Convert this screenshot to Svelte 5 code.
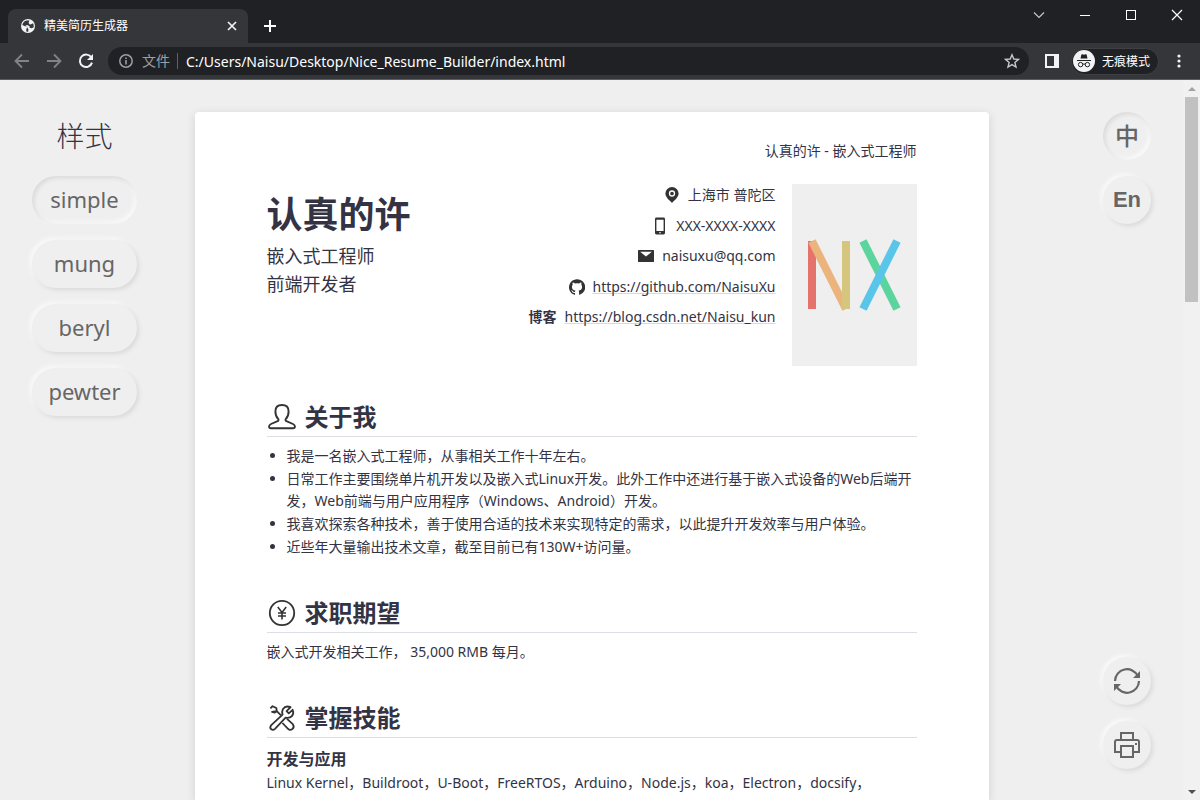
<script lang="ts">
  const styles = ['simple', 'mung', 'beryl', 'pewter'];
  let activeStyle = $state('simple');
  let language = $state('zh');
  let address = $state('C:/Users/Naisu/Desktop/Nice_Resume_Builder/index.html');
</script>

<div class="window">
  <header class="tabstrip">
    <div class="tab">
      <svg class="globe" width="14" height="14" viewBox="0 0 14 14" aria-hidden="true">
        <circle cx="7" cy="7" r="7" fill="#f1f3f4" />
        <path d="M5.6 1.4 C3.4 1.9 1.7 3.6 1.3 6 L4 7.3 L5.6 7.3 L6.6 8.6 L5.3 9.8 L5.3 12.4 C6 12.6 6.600 12.700 7.200 12.700 L7.400 10.200 L6.200 8.200 L4.400 6.600 L6.200 6 L8.600 7.200 L8.600 8.800 L10.4 9.3 L12.6 8.4 C12.9 7 12.6 5.4 12 4.2 L10.2 5.2 L8.6 5.400 L7.600 3.800 L8.400 1.600 Z" fill="#35363a" />
      </svg>
      <span class="tab-title">精美简历生成器</span>
      <button class="plain" aria-label="关闭标签页">
        <svg width="10" height="10" viewBox="0 0 10 10"><path d="M1 1 L9 9 M9 1 L1 9" stroke="#f1f3f4" stroke-width="1.7" /></svg>
      </button>
    </div>
    <button class="plain new-tab" aria-label="新标签页">
      <svg width="12" height="12" viewBox="0 0 12 12"><path d="M6 0 V12 M0 6 H12" stroke="#fff" stroke-width="2" /></svg>
    </button>
    <div class="window-controls">
      <button class="plain" aria-label="搜索标签页"><svg width="12" height="12" viewBox="0 0 12 12"><path d="M1 3.5 L6 8.5 L11 3.5" fill="none" stroke="#ccc" stroke-width="1.1" /></svg></button>
      <button class="plain" aria-label="最小化"><svg width="12" height="12" viewBox="0 0 12 12"><path d="M1 6.5 H11" stroke="#fff" /></svg></button>
      <button class="plain" aria-label="最大化"><svg width="12" height="12" viewBox="0 0 12 12"><rect x="1.5" y="1.5" width="9" height="9" fill="none" stroke="#fff" /></svg></button>
      <button class="plain" aria-label="关闭"><svg width="12" height="12" viewBox="0 0 12 12"><path d="M1 1 L11 11 M11 1 L1 11" stroke="#fff" stroke-width="1.2" /></svg></button>
    </div>
  </header>

  <nav class="toolbar">
    <div class="nav-buttons">
      <button class="plain" aria-label="后退"><svg width="16" height="16" viewBox="0 0 16 16"><path d="M15 8 H2 M8 1.5 L1.5 8 L8 14.5" fill="none" stroke="#818386" stroke-width="1.8" /></svg></button>
      <button class="plain" aria-label="前进"><svg width="16" height="16" viewBox="0 0 16 16"><path d="M1 8 H14 M8 1.5 L14.5 8 L8 14.5" fill="none" stroke="#818386" stroke-width="1.8" /></svg></button>
      <button class="plain" aria-label="重新加载"><svg width="16" height="16" viewBox="0 0 16 16"><path d="M13.4 4.6 A6.2 6.2 0 1 0 14 9.6" fill="none" stroke="#f1f3f4" stroke-width="2" /><path d="M15 1 V7 H9 Z" fill="#f1f3f4" /></svg></button>
    </div>
    <div class="omnibox">
      <svg width="14" height="14" viewBox="0 0 14 14" aria-hidden="true"><circle cx="7" cy="7" r="6.2" fill="none" stroke="#9aa0a6" stroke-width="1.5" /><path d="M7 6 V10.5 M7 3.4 V5" stroke="#9aa0a6" stroke-width="1.6" /></svg>
      <span class="scheme">文件</span>
      <input aria-label="地址" bind:value={address} />
      <button class="plain" aria-label="收藏">
        <svg width="16" height="16" viewBox="0 0 16 16"><path d="M8 1.8 L9.8 6 L14.4 6.4 L10.9 9.4 L12 14 L8 11.6 L4 14 L5.1 9.4 L1.6 6.4 L6.2 6 Z" fill="none" stroke="#c4c7c9" stroke-width="1.4" /></svg>
      </button>
    </div>
    <button class="plain side" aria-label="侧边栏">
      <svg width="14" height="14" viewBox="0 0 14 14"><path fill-rule="evenodd" d="M0 0 H14 V14 H0 Z M2 2 H9 V12 H2 Z" fill="#f1f3f4" /></svg>
    </button>
    <button class="incognito">
      <svg width="22" height="22" viewBox="0 0 22 22" aria-hidden="true">
        <circle cx="11" cy="11" r="11" fill="#f1f3f4" />
        <path d="M7.5 8.6 L8.4 4.6 Q8.6 4 9.3 4.2 L11 4.7 L12.7 4.2 Q13.4 4 13.6 4.6 L14.5 8.6 Z" fill="#202124" />
        <path d="M4 10.5 H18" stroke="#202124" stroke-width="1" />
        <circle cx="7.6" cy="14.6" r="2.2" fill="none" stroke="#202124" stroke-width="1" />
        <circle cx="14.4" cy="14.6" r="2.2" fill="none" stroke="#202124" stroke-width="1" />
        <path d="M9.8 14.4 Q11 13.4 12.2 14.4" fill="none" stroke="#202124" />
      </svg>
      <span>无痕模式</span>
    </button>
    <button class="plain menu" aria-label="菜单">
      <svg width="4" height="14" viewBox="0 0 4 14"><g fill="#f1f3f4"><circle cx="2" cy="2" r="1.6" /><circle cx="2" cy="7" r="1.6" /><circle cx="2" cy="12" r="1.6" /></g></svg>
    </button>
  </nav>

  <div class="viewport">
    <div class="page">
      <aside class="styles">
        <h2>样式</h2>
        {#each styles as name}
          <button class="soft pill" class:pressed={activeStyle === name} aria-pressed={activeStyle === name} onclick={() => (activeStyle = name)}>{name}</button>
        {/each}
      </aside>

      <main class="paper">
        <p class="running-head">认真的许 - 嵌入式工程师</p>

        <div class="intro">
          <div class="identity">
            <h1>认真的许</h1>
            <p>嵌入式工程师</p>
            <p>前端开发者</p>
          </div>
          <ul class="contacts">
            <li>
              <svg width="16" height="16" viewBox="0 0 16 16" aria-hidden="true"><path d="M8 0 A6.6 6.6 0 0 0 1.4 6.6 C1.4 10.4 6 14 8 16 C10 14 14.6 10.4 14.6 6.6 A6.6 6.6 0 0 0 8 0 Z" fill="#333" /><circle cx="8" cy="6.5" r="2.5" fill="none" stroke="#fff" stroke-width="1.3" /></svg>
              <span>上海市 普陀区</span>
            </li>
            <li>
              <svg width="16" height="18" viewBox="0 0 16 18" aria-hidden="true"><path fill-rule="evenodd" d="M4.4 0.6 H11.6 Q13 0.6 13 2 V16 Q13 17.4 11.6 17.4 H4.4 Q3 17.4 3 16 V2 Q3 0.6 4.4 0.6 Z M4.4 2.8 V14 H11.6 V2.8 Z M8 15 A0.8 0.8 0 1 0 8 16.6 A0.8 0.8 0 1 0 8 15 Z" fill="#333" /></svg>
              <span>XXX-XXXX-XXXX</span>
            </li>
            <li>
              <svg width="16" height="12" viewBox="0 0 16 12" aria-hidden="true"><rect width="16" height="12" rx="0.6" fill="#333" /><path d="M2.2 1.7 H13.8 L8 6.6 Z" fill="#fff" /></svg>
              <span>naisuxu@qq.com</span>
            </li>
            <li>
              <svg width="16" height="16" viewBox="0 0 16 16" aria-hidden="true"><path d="M8 .2C3.6.2 0 3.8 0 8.2c0 3.5 2.3 6.500 5.500 7.600.4.1.5-.2.5-.4v-1.500c-2.200.5-2.700-.9-2.700-.9-.4-.9-.9-1.200-.9-1.200-.7-.5.1-.5.1-.5.8.1 1.200.8 1.200.8.7 1.200 1.900.9 2.300.7 0-.4.3-.8.5-1C4.700 11.400 2.900 10.700 2.900 7.800c0-.9.3-1.600.8-2.100-.1-.2-.4-1 .1-2.100 0 0 .7-.2 2.200.8a7.600 7.600 0 0 1 4 0c1.500-1 2.200-.8 2.200-.8.4 1.100.2 1.900.1 2.100.5.6.8 1.300.8 2.100 0 3-1.800 3.600-3.600 3.900.3.200.6.7.6 1.500v2.200c0 .2.100.5.600.4A8 8 0 0 0 8 .2Z" fill="#333" /></svg>
              <a href="https://github.com/NaisuXu">https://github.com/NaisuXu</a>
            </li>
            <li>
              <strong>博客</strong>
              <a href="https://blog.csdn.net/Naisu_kun">https://blog.csdn.net/Naisu_kun</a>
            </li>
          </ul>
          <svg class="photo" width="125" height="182" viewBox="0 0 125 182" role="img" aria-label="NX">
            <rect width="125" height="182" fill="#efefef" />
            <g stroke-width="8" fill="none">
              <path d="M20 57 V125" stroke="#e5736b" />
              <path d="M54 57 V125" stroke="#d6c57c" />
              <path d="M20 57 L54 125" stroke="#ebb47c" />
              <path d="M54 57 V125" stroke="#d6c57c" />
              <path d="M71 57 L105 125" stroke="#5cd49e" />
              <path d="M105 57 L71 125" stroke="#59c5e8" />
            </g>
          </svg>
        </div>

        <section>
          <h2>
            <svg width="30" height="30" viewBox="0 0 30 30" aria-hidden="true"><path d="M11.300 17.100 C9.200 15 8.400 12.400 8.400 9.400 C8.400 5.200 11 3 15 3 C19 3 21.600 5.200 21.600 9.400 C21.600 12.400 20.800 15 18.700 17.100 C18.200 17.800 18.500 18.800 19.400 19.200 L26 22 C28.400 23.100 28.800 26.200 26 26.200 H4 C1.200 26.200 1.600 23.100 4 22 L10.600 19.200 C11.500 18.800 11.800 17.800 11.300 17.100 Z" fill="none" stroke="#333" stroke-width="1.900" /></svg>
            关于我
          </h2>
          <ul class="about">
            <li>我是一名嵌入式工程师，从事相关工作十年左右。</li>
            <li>日常工作主要围绕单片机开发以及嵌入式Linux开发。此外工作中还进行基于嵌入式设备的Web后端开发，Web前端与用户应用程序（Windows、Android）开发。</li>
            <li>我喜欢探索各种技术，善于使用合适的技术来实现特定的需求，以此提升开发效率与用户体验。</li>
            <li>近些年大量输出<a href="https://blog.csdn.net/Naisu_kun">技术文章</a>，截至目前已有130W+访问量。</li>
          </ul>
        </section>

        <section>
          <h2>
            <svg width="30" height="30" viewBox="0 0 30 30" aria-hidden="true"><g fill="none" stroke="#333" stroke-width="1.800"><circle cx="15" cy="15" r="12.200" /><path d="M10.800 9 L15 14.500 L19.200 9 M15 14.500 V21.500 M11 15 H19 M11 18 H19" stroke-width="1.600" /></g></svg>
            求职期望
          </h2>
          <p>嵌入式开发相关工作， 35,000 RMB 每月。</p>
        </section>

        <section>
          <h2>
            <svg width="30" height="30" viewBox="0 0 30 30" aria-hidden="true"><g fill="none" stroke="#333" stroke-width="1.800" stroke-linejoin="round"><path d="M3.400 5.400 L5.600 3.200 L9.300 5 L9.800 8.200 L14 12.400 M9.800 8.200 L7.800 9.600 L5 8.800 Z" /><path d="M20 15.800 L25.800 21.200 Q27.800 24 25.400 26 Q23 27.800 20.800 25.600 L15.400 20" /><path d="M23.600 4.200 Q18.600 2.200 16 6 Q14.600 8.500 15.600 11.600 L4 22.400 Q2.400 24.800 4.200 26.200 Q6 27.800 8 25.800 L18.600 14.600 Q22.400 15.600 25 13 Q27.200 10.200 25.600 6.800 L21.800 10.400 L19.600 8.200 Z" /></g></svg>
            掌握技能
          </h2>
          <h3>开发与应用</h3>
          <p>Linux Kernel，Buildroot，U-Boot，FreeRTOS，Arduino，Node.js，koa，Electron，docsify，</p>
        </section>
      </main>

      <aside class="tools">
        <div class="tool-group">
          <button class="soft round zh" class:pressed={language === 'zh'} onclick={() => (language = 'zh')}>中</button>
          <button class="soft round en" class:pressed={language === 'en'} onclick={() => (language = 'en')}>En</button>
        </div>
        <div class="tool-group">
          <button class="soft round" aria-label="刷新">
            <svg width="28" height="28" viewBox="0 0 28 28"><g fill="none" stroke="#666" stroke-width="2.200"><path d="M2 14 A12 12 0 0 1 24.800 9" /><path d="M26 14 A12 12 0 0 1 3.200 19" /></g><path d="M27 4 V11 H20 Z M1 24 V17 H8 Z" fill="#666" /></svg>
          </button>
          <button class="soft round" aria-label="打印">
            <svg width="28" height="28" viewBox="0 0 28 28"><g fill="none" stroke="#666" stroke-width="2"><path d="M8 9 V2 H20 V9" /><path d="M8 21 H2 V11 Q2 9 4 9 H24 Q26 9 26 11 V21 H20" /><rect x="8" y="15" width="12" height="11" /></g><rect x="22" y="12" width="2" height="2" fill="#666" /></svg>
          </button>
        </div>
      </aside>
    </div>
    <div class="scrollbar" aria-hidden="true">
      <span class="arrow up"></span>
      <span class="thumb"></span>
      <span class="arrow down"></span>
    </div>
  </div>
</div>

<style>
  :global(body) { margin: 0; }
  * { box-sizing: border-box; }
  h1, h2, h3, p, ul { margin: 0; padding: 0; }
  svg { display: block; flex: none; }
  button, input { font-family: inherit; }

  .window {
    height: 100vh;
    display: flex;
    flex-direction: column;
    overflow: hidden;
    color: #333344;
    font: 14px/22px "Noto Sans", "Noto Sans CJK SC", sans-serif;
  }
  .plain {
    display: flex;
    align-items: center;
    justify-content: center;
    padding: 0;
    border: 0;
    background: none;
  }

  .tabstrip {
    display: flex;
    flex: none;
    height: 43px;
    padding-left: 8px;
    background: #202124;
  }
  .tab {
    display: flex;
    align-items: center;
    gap: 9px;
    width: 240px;
    margin-top: 9px;
    padding: 0 11px 0 13px;
    border-radius: 8px 8px 0 0;
    background: #35363a;
    color: #fff;
    font-size: 12px;
  }
  .tab-title { flex: 1; }
  .new-tab { width: 28px; margin: 9px 0 0 8px; }
  .window-controls {
    display: grid;
    grid-template-columns: repeat(4, 46px);
    height: 30px;
    margin-left: auto;
  }

  .toolbar {
    display: flex;
    align-items: center;
    flex: none;
    height: 37px;
    padding: 0 19px 0 14px;
    border-bottom: 1px solid #5b5c60;
    background: #35363a;
    color: #fff;
  }
  .nav-buttons { display: flex; gap: 16px; margin-right: 14px; }
  .omnibox {
    display: flex;
    align-items: center;
    flex: 1;
    height: 28px;
    padding: 0 9px 0 11px;
    border-radius: 14px;
    background: #202124;
  }
  .scheme {
    margin: 0 8px 0 9px;
    padding-right: 7px;
    border-right: 1px solid #5f6368;
    color: #9aa0a6;
    line-height: 16px;
  }
  .omnibox input {
    flex: 1;
    min-width: 0;
    padding: 0;
    border: 0;
    outline: 0;
    background: none;
    color: #fff;
    font-size: 14px;
  }
  .side { margin: 0 12px 0 16px; }
  .incognito {
    display: flex;
    align-items: center;
    gap: 7px;
    height: 27px;
    padding: 0 8px 0 1px;
    border: 1px solid #3f4044;
    border-radius: 14px;
    background: #202124;
    color: #fff;
    font-size: 12px;
  }
  .menu { margin-left: 18px; }

  .viewport {
    display: flex;
    flex: 1;
    min-height: 0;
    background: #efefef;
  }
  .page {
    display: grid;
    grid-template-columns: 1fr minmax(0, 794px) 1fr;
    flex: 1;
    min-width: 0;
    padding-top: 32px;
    overflow: hidden;
  }

  .styles {
    display: flex;
    flex-direction: column;
    gap: 16px;
    width: 137px;
    padding-left: 32px;
  }
  .styles h2 {
    font-size: 28px;
    font-weight: 300;
    line-height: 48px;
    text-align: center;
  }
  .soft {
    display: flex;
    align-items: center;
    justify-content: center;
    height: 48px;
    padding: 0;
    border: 0;
    border-radius: 24px;
    background: #efefef;
    box-shadow: 2px 2px 4px #d9d9d9, -2px -2px 4px #fbfbfb;
    color: #666;
    font-size: 22px;
  }
  .soft.pressed { box-shadow: inset 2px 2px 4px #d9d9d9, inset -2px -2px 4px #fbfbfb; }
  .pill { padding-bottom: 2px; }

  .paper {
    padding: 28px 72px 0;
    border-radius: 4px 4px 0 0;
    background: #fff;
    box-shadow: 0 2px 8px #d0d0d0;
  }
  .running-head { margin-bottom: 22px; text-align: right; }
  .intro { display: flex; gap: 16px; }
  .identity { flex: 1; padding-top: 7px; font-size: 18px; line-height: 28px; }
  .identity h1 { margin-bottom: 3px; font-size: 36px; line-height: 48px; }
  .contacts {
    display: flex;
    flex-direction: column;
    justify-content: space-between;
    align-items: flex-end;
    height: 144px;
    list-style: none;
  }
  .contacts li { display: flex; align-items: center; gap: 8px; height: 22px; }
  a {
    color: inherit;
    text-decoration: underline 1px #d8d8e2;
    text-decoration-skip-ink: none;
    text-underline-offset: 1px;
  }

  section { margin-top: 36px; }
  .intro + section { margin-top: 32px; }
  section h2 {
    display: flex;
    align-items: center;
    gap: 8px;
    height: 39px;
    margin-bottom: 8px;
    border-bottom: 1px solid #dddde6;
    font-size: 24px;
    line-height: 38px;
  }
  .about { padding-left: 20px; }
  .about li + li { margin-top: 1px; }
  h3 { font-size: 16px; line-height: 26px; }

  .tools {
    display: flex;
    flex-direction: column;
    justify-content: space-between;
    align-items: flex-end;
    padding: 0 32px 31px 0;
  }
  .tool-group { display: grid; gap: 16px; }
  .round { width: 48px; font-size: 24px; font-weight: 700; }
  .zh { padding-bottom: 4px; font-weight: 500; }
  .en { font-family: "Liberation Sans", sans-serif; font-size: 22px; }

  .scrollbar {
    display: flex;
    flex-direction: column;
    align-items: center;
    flex: none;
    width: 17px;
    padding: 7px 0 6px;
    background: #f1f1f1;
  }
  .arrow { border: 4px solid transparent; }
  .up { border-top: 0; border-bottom-color: #a3a3a3; }
  .down { margin-top: auto; border-bottom: 0; border-top-color: #505050; }
  .thumb { width: 13px; height: 205px; margin-top: 6px; background: #c1c1c1; }
</style>
